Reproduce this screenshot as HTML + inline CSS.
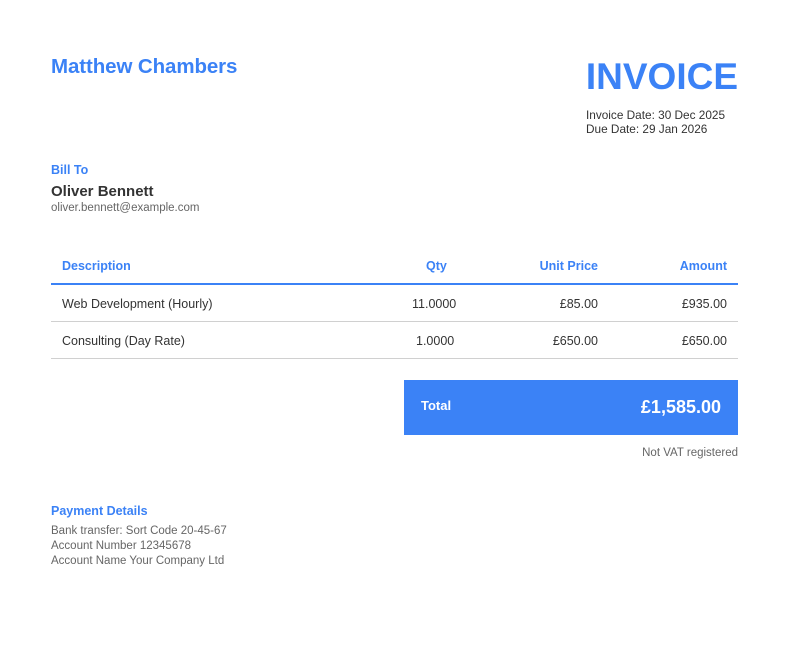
<!DOCTYPE html>
<html><head><meta charset="utf-8"><style>
*{margin:0;padding:0;box-sizing:border-box}
body{width:790px;height:649px;background:#fff;font-family:"Liberation Sans",sans-serif;color:#333;position:relative;overflow:hidden}
.a{position:absolute;white-space:nowrap}
.blue{color:#3b82f6}
.g{color:#666}
.r{text-align:right}
</style></head><body>
<div class="a blue" style="left:51px;top:55px;font-size:20.5px;font-weight:bold;letter-spacing:-0.1px">Matthew Chambers</div>
<div class="a blue" style="right:52px;top:56px;font-size:37px;font-weight:bold">INVOICE</div>
<div class="a" style="left:586px;top:108px;font-size:11.8px;line-height:14px;color:#333">Invoice Date: 30 Dec 2025<br>Due Date: 29 Jan 2026</div>

<div class="a blue" style="left:51px;top:163px;font-size:12.5px;font-weight:bold">Bill To</div>
<div class="a" style="left:51px;top:183px;font-size:15px;font-weight:bold;color:#333">Oliver Bennett</div>
<div class="a g" style="left:51px;top:202px;font-size:11.5px">oliver.bennett@example.com</div>

<div class="a blue" style="left:62px;top:259px;font-size:12.5px;font-weight:bold">Description</div>
<div class="a blue" style="left:426px;top:259px;font-size:12.5px;font-weight:bold">Qty</div>
<div class="a blue r" style="right:192px;top:259px;font-size:12.5px;font-weight:bold">Unit Price</div>
<div class="a blue r" style="right:63px;top:259px;font-size:12.5px;font-weight:bold">Amount</div>
<div class="a" style="left:51px;top:283px;width:687px;height:2px;background:#3b82f6"></div>

<div class="a" style="left:62px;top:297px;font-size:12.5px">Web Development (Hourly)</div>
<div class="a" style="left:412px;top:297px;font-size:12.5px">11.0000</div>
<div class="a r" style="right:192px;top:297px;font-size:12.5px">£85.00</div>
<div class="a r" style="right:63px;top:297px;font-size:12.5px">£935.00</div>
<div class="a" style="left:51px;top:321px;width:687px;height:1px;background:#d0d0d0"></div>

<div class="a" style="left:62px;top:334px;font-size:12.5px">Consulting (Day Rate)</div>
<div class="a" style="left:416px;top:334px;font-size:12.5px">1.0000</div>
<div class="a r" style="right:192px;top:334px;font-size:12.5px">£650.00</div>
<div class="a r" style="right:63px;top:334px;font-size:12.5px">£650.00</div>
<div class="a" style="left:51px;top:358px;width:687px;height:1px;background:#d0d0d0"></div>

<div class="a" style="left:404px;top:380px;width:334px;height:55px;background:#3b82f6"></div>
<div class="a" style="left:421px;top:398px;font-size:13px;font-weight:bold;color:#fff">Total</div>
<div class="a r" style="right:69px;top:397px;font-size:18px;font-weight:bold;color:#fff">£1,585.00</div>
<div class="a g r" style="right:52px;top:447px;font-size:11.5px">Not VAT registered</div>

<div class="a blue" style="left:51px;top:504px;font-size:12.5px;font-weight:bold">Payment Details</div>
<div class="a g" style="left:51px;top:524px;font-size:11.5px;line-height:15px">Bank transfer: Sort Code 20-45-67<br>Account Number 12345678<br>Account Name Your Company Ltd</div>
</body></html>
